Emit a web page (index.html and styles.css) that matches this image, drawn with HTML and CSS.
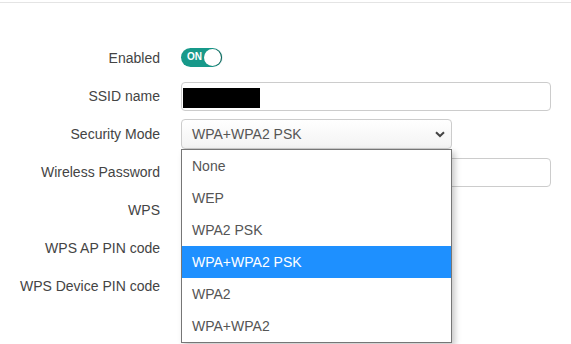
FILE: index.html
```html
<!DOCTYPE html>
<html lang="en">
<head>
  <meta charset="UTF-8" />
  <title>Wireless Settings</title>
  <link rel="stylesheet" href="styles.css">
</head>
<body>
  <div class="topbar"></div>

  <div class="form">
    <div class="row">
      <label>Enabled</label>
      <div class="toggle"><span class="toggle-text">ON</span><span class="knob"></span></div>
    </div>

    <div class="row">
      <label>SSID name</label>
      <div class="input wide"><span class="redacted"></span></div>
    </div>

    <div class="row">
      <label>Security Mode</label>
      <div class="select-wrap">
        <div class="select">
          <span>WPA+WPA2 PSK</span>
          <svg class="chevron" width="10" height="7" viewBox="0 0 10 7">
            <path d="M1 1.2 L5 5 L9 1.2" fill="none" stroke="#444" stroke-width="2"/>
          </svg>
        </div>
        <ul class="options">
          <li>None</li>
          <li>WEP</li>
          <li>WPA2 PSK</li>
          <li class="selected">WPA+WPA2 PSK</li>
          <li>WPA2</li>
          <li>WPA+WPA2</li>
        </ul>
      </div>
    </div>

    <div class="row">
      <label>Wireless Password</label>
      <div class="input wide"></div>
    </div>

    <div class="row">
      <label>WPS</label>
    </div>

    <div class="row">
      <label>WPS AP PIN code</label>
    </div>

    <div class="row">
      <label>WPS Device PIN code</label>
    </div>
  </div>
</body>
</html>
```

FILE: styles.css
```css
html, body {
  min-height: 344px;
}

body {
  margin: 0;
  font-family: "Liberation Sans", Arial, sans-serif;
  background: #fff;
  color: #444;
}

.topbar {
  height: 2px;
  border-bottom: 1px solid #e4e4e4;
}

.form {
  margin-top: 36px;
  padding-bottom: 50px;
}

.row {
  display: grid;
  grid-template-columns: 160px 1fr;
  column-gap: 21px;
  align-items: center;
  height: 38px;
}

.row label {
  text-align: right;
  font-size: 14px;
  color: #444;
}

.toggle {
  position: relative;
  width: 41px;
  height: 19px;
  border-radius: 10px;
  background: #17998a;
  margin-top: -2px;
}

.toggle-text {
  position: absolute;
  left: 6px;
  top: 3px;
  font-size: 10px;
  font-weight: bold;
  color: #fff;
}

.knob {
  position: absolute;
  right: 1px;
  top: 1px;
  width: 17px;
  height: 17px;
  border-radius: 50%;
  background: #fff;
  box-shadow: 1px 0 1px #0e5d54;
}

.input {
  box-sizing: border-box;
  height: 29px;
  border: 1px solid #ccc;
  border-radius: 4px;
  background: #fff;
  display: flex;
  align-items: center;
}

.wide {
  width: 370px;
}

.redacted {
  display: block;
  width: 77px;
  height: 20px;
  margin-left: 1px;
  margin-top: 3px;
  background: #000;
}

.select-wrap {
  position: relative;
  width: 271px;
}

.select {
  box-sizing: border-box;
  height: 30px;
  border: 1px solid #ccc;
  border-radius: 4px;
  background: linear-gradient(#fff, #f3f3f3);
  display: flex;
  align-items: center;
  justify-content: space-between;
  padding: 0 6px 0 10px;
  font-size: 14px;
  color: #555;
}

.chevron {
  margin-top: 1px;
}

.options {
  position: absolute;
  top: 30px;
  left: 0;
  width: 271px;
  box-sizing: border-box;
  margin: 0;
  padding: 0;
  list-style: none;
  background: #fff;
  border: 1px solid #767676;
  box-shadow: 3px 3px 6px rgba(0, 0, 0, 0.22);
  z-index: 2;
}

.options li {
  height: 32px;
  line-height: 32px;
  padding-left: 10px;
  font-size: 14px;
  color: #555;
}

.options li.selected {
  background: #1e90ff;
  color: #fff;
}
```
